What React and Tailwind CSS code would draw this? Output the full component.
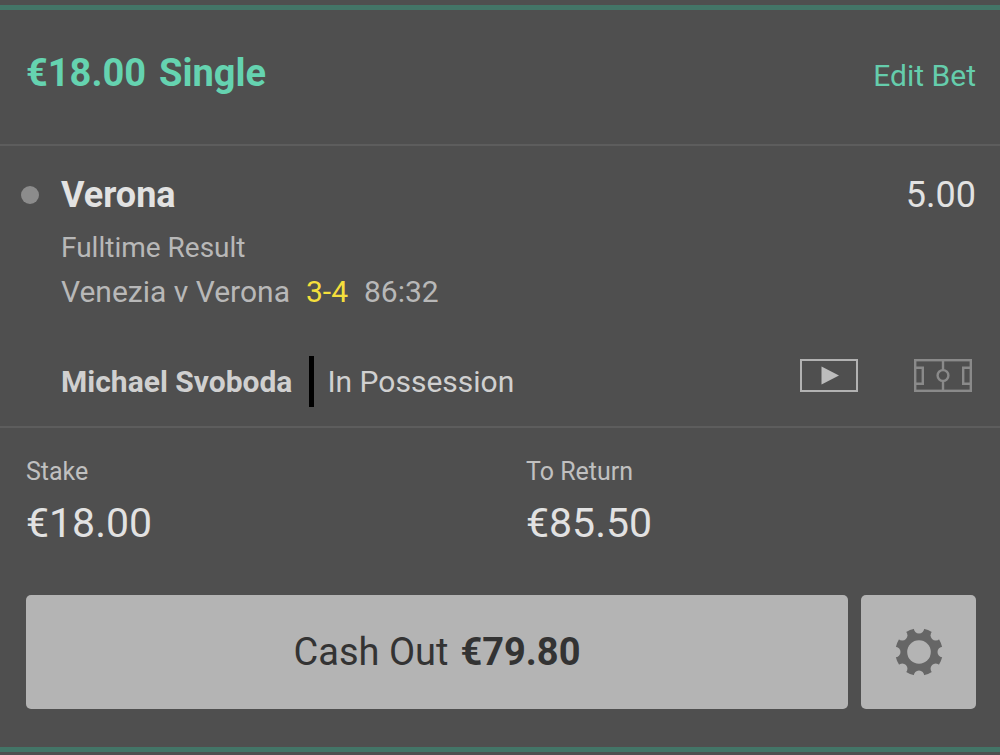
const bet = {
  stake: "€18.00",
  type: "Single",
  selection: "Verona",
  odds: "5.00",
  market: "Fulltime Result",
  fixture: "Venezia v Verona",
  score: "3-4",
  clock: "86:32",
  player: "Michael Svoboda",
  event: "In Possession",
  toReturn: "€85.50",
  cashOut: "€79.80",
};

const gearAngles = [0, 45, 90, 135, 180, 225, 270, 315];

function PlayIcon() {
  return (
    <svg className="w-[58px] h-[33px]" viewBox="0 0 58 33" fill="none">
      <rect x="1" y="1" width="56" height="31" stroke="#b2b2b2" strokeWidth="2" />
      <path d="M21.5 7.5 L39 16.5 L21.5 25.5 Z" fill="#bdbdbd" />
    </svg>
  );
}

function PitchIcon() {
  return (
    <svg className="w-[58px] h-[33px]" viewBox="0 0 58 33" fill="none" stroke="#8a8a8a" strokeWidth="2.4">
      <rect x="1.2" y="1.2" width="55.6" height="30.6" />
      <path d="M29 1V11M29 22V32" />
      <circle cx="29" cy="16.5" r="5.4" />
      <path d="M1 8.7H8.8V24.7H1M57 8.7H49.2V24.7H57" />
    </svg>
  );
}

function GearIcon() {
  return (
    <svg className="w-12 h-12" viewBox="-24 -24 48 48">
      <mask id="gearCut" maskUnits="userSpaceOnUse" x="-24" y="-24" width="48" height="48">
        <circle r="23.7" fill="white" />
        <circle r="11.8" fill="black" />
        {gearAngles.map((a) => (
          <circle key={a} cx="23.7" r="5.2" fill="black" transform={`rotate(${a})`} />
        ))}
      </mask>
      <rect x="-24" y="-24" width="48" height="48" fill="#666666" mask="url(#gearCut)" />
    </svg>
  );
}

function Amount({ label, value }) {
  return (
    <div className="pl-[26px]">
      <dt className="text-[25px] leading-[40px] text-[#c0c0c0]">{label}</dt>
      <dd className="mt-1 text-[41px] leading-[54px] text-[#e2e2e2]">{value}</dd>
    </div>
  );
}

export default function App() {
  return (
    <div className="min-h-screen bg-[#4f4f4f] pt-[5px] font-['Roboto',sans-serif]">
      <article className="border-y-[5px] border-[#437567]">
        {/* Header */}
        <header className="flex items-baseline justify-between border-b-2 border-[#5d5d5d] pl-[26px] pr-6 pt-10 pb-[45px]">
          <h1 className="flex gap-[13px] text-[38px] leading-[46px] font-bold text-[#65d3b0]">
            <span>{bet.stake}</span>
            <span>{bet.type}</span>
          </h1>
          <button type="button" className="text-[30px] leading-[46px] text-[#65cdac]">Edit Bet</button>
        </header>

        {/* Selection */}
        <section className="flex gap-[22px] border-b-2 border-[#5d5d5d] pl-[21px] pr-6 pt-7 pb-[18px]">
          <div className="flex h-[42px] items-center">
            <span className="block size-[18px] rounded-full bg-[#8c8c8c]"></span>
          </div>
          <div className="flex-1">
            <div className="flex justify-between text-[36px] leading-[42px] text-[#e2e2e2]">
              <h2 className="font-bold">{bet.selection}</h2>
              <span>{bet.odds}</span>
            </div>
            <p className="mt-2.5 text-[28px] leading-[44px] text-[#b8b8b8]">{bet.market}</p>
            <p className="flex gap-4 text-[30px] leading-[44px] text-[#b8b8b8]">
              <span>{bet.fixture}</span>
              <span className="text-[#f5df3c]">{bet.score}</span>
              <span>{bet.clock}</span>
            </p>
            <div className="mt-10 flex h-[54px] items-center text-[30px] text-[#d0d0d0]">
              <span className="font-bold">{bet.player}</span>
              <span className="ml-[17px] mr-[13px] h-[51px] w-[5px] bg-black"></span>
              <span>{bet.event}</span>
              <div className="ml-auto flex gap-14 pb-3 pr-1">
                <button type="button" aria-label="Watch"><PlayIcon /></button>
                <button type="button" aria-label="Match view"><PitchIcon /></button>
              </div>
            </div>
          </div>
        </section>

        {/* Stake and return */}
        <dl className="grid grid-cols-2 pt-6">
          <Amount label="Stake" value={bet.stake} />
          <Amount label="To Return" value={bet.toReturn} />
        </dl>

        {/* Actions */}
        <div className="mt-[45px] flex gap-[13px] pl-[26px] pr-6 pb-[38px]">
          <button type="button" className="flex h-[114px] flex-1 items-center justify-center gap-3 rounded-[5px] bg-[#b4b4b4] text-[38px] text-[#333333]">
            <span>Cash Out</span>
            <span className="font-bold">{bet.cashOut}</span>
          </button>
          <button type="button" aria-label="Cash out settings" className="flex h-[114px] w-[115px] items-center justify-center rounded-[5px] bg-[#b4b4b4]">
            <GearIcon />
          </button>
        </div>
      </article>
    </div>
  );
}
